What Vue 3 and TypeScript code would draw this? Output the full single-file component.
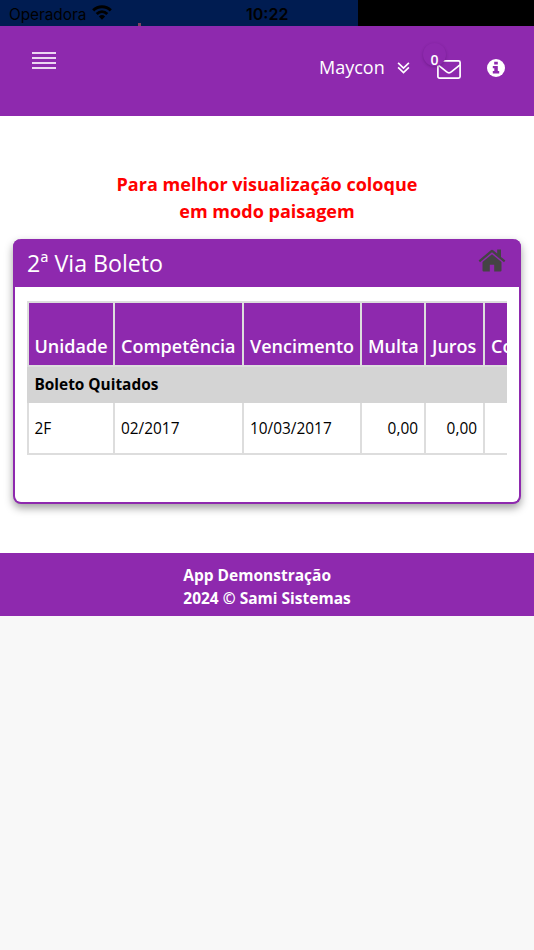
<script setup lang="ts">
interface Column {
  key: string
  label: string
  width: number
  numeric?: boolean
}

const columns: Column[] = [
  { key: 'unidade', label: 'Unidade', width: 86 },
  { key: 'competencia', label: 'Competência', width: 129 },
  { key: 'vencimento', label: 'Vencimento', width: 118 },
  { key: 'multa', label: 'Multa', width: 64, numeric: true },
  { key: 'juros', label: 'Juros', width: 59, numeric: true },
  { key: 'correcao', label: 'Correção', width: 100, numeric: true },
]

const rows: Record<string, string>[] = [
  { unidade: '2F', competencia: '02/2017', vencimento: '10/03/2017', multa: '0,00', juros: '0,00', correcao: '' },
]
</script>

<template>
  <div class="page">
    <div class="status">
      <span class="carrier">Operadora</span>
      <svg class="wifi" viewBox="0 0 20 15" fill="none" stroke="#000" stroke-width="3">
        <path d="M1.2 5.4C6.2.6 13.8.6 18.8 5.4" />
        <path d="M4.7 9C7.8 6.1 12.2 6.1 15.3 9" />
        <path d="M6.9 11.5Q10 8.7 13.1 11.5L10 14.7Z" fill="#000" stroke="none" />
      </svg>
      <span class="clock">10:22</span>
      <i class="speck"></i>
    </div>

    <header class="topbar">
      <button class="menu" aria-label="Menu"><i></i><i></i><i></i><i></i></button>
      <div class="tools">
        <span class="user">Maycon</span>
        <svg class="chevrons" viewBox="0 0 12 12" fill="none" stroke="#fff" stroke-width="1.7">
          <path d="M.6.9 6 6 11.4.9M.6 5.4 6 10.5 11.4 5.4" />
        </svg>
        <div class="mail">
          <svg viewBox="0 0 24 19" fill="none" stroke="#fff" stroke-width="1.7" stroke-linejoin="round">
            <rect x=".9" y=".9" width="22.2" height="17.2" rx="1.6" />
            <path d="M1 4.8 9.4 11.6Q12 14 14.6 11.6L23 4.8" />
          </svg>
          <span class="count">0</span>
        </div>
        <svg class="info" viewBox="0 0 18 18">
          <circle cx="9" cy="9" r="9" fill="#fff" />
          <path d="M7.2 2.8h3.6v2.7H7.2ZM5.8 7h5v5.1H12.2v2.4H5.8v-2.4h1.5V9.2H5.8Z" fill="#8e29ae" />
        </svg>
      </div>
    </header>

    <main class="content">
      <p class="notice">Para melhor visualização coloque<br />em modo paisagem</p>
      <section class="card">
        <div class="card-head">
          <h1>2ª Via Boleto</h1>
          <svg class="home" viewBox="0 0 28 23" fill="#444">
            <path d="M14 5.2 23.5 13V21.4Q23.5 22.5 22.4 22.5H16.2V15.7H11.8V22.5H5.6Q4.5 22.5 4.5 21.4V13Z" />
            <path d="M19.2.6H23V7.9L27.4 11.6 26 13.3 14 3.3 2 13.3.6 11.6 12.8 1.2Q14 .3 15.2 1.2L19.2 4.6Z" />
          </svg>
        </div>
        <div class="scroller">
          <table>
            <colgroup>
              <col v-for="c in columns" :key="c.key" :style="{ width: c.width + 'px' }" />
            </colgroup>
            <thead>
              <tr>
                <th v-for="c in columns" :key="c.key">{{ c.label }}</th>
              </tr>
            </thead>
            <tbody>
              <tr class="group">
                <td :colspan="columns.length">Boleto Quitados</td>
              </tr>
              <tr v-for="(row, i) in rows" :key="i" class="item">
                <td v-for="c in columns" :key="c.key" :class="{ numeric: c.numeric }">{{ row[c.key] }}</td>
              </tr>
            </tbody>
          </table>
        </div>
      </section>
    </main>

    <footer class="footer">
      <div>App Demonstração<br />2024 © Sami Sistemas</div>
    </footer>
  </div>
</template>

<style>
body {
  background: #f8f8f8;
}
</style>

<style scoped>
.page {
  width: 534px;
  height: 950px;
  overflow: hidden;
  background: #f8f8f8;
  font-family: 'Open Sans', sans-serif;
}
.page * {
  box-sizing: border-box;
}
.status {
  position: relative;
  display: flex;
  height: 26px;
  padding-left: 9px;
  background: linear-gradient(90deg, #001c51 358.5px, #000 358.5px);
  font: 16px/28px Inter, sans-serif;
  color: #000;
}
.carrier {
  width: 83px;
  font-size: 15.4px;
  letter-spacing: -0.05px;
  line-height: 29px;
  white-space: nowrap;
}
.wifi {
  width: 20px;
  height: 15px;
  margin-top: 5px;
}
.clock {
  position: absolute;
  left: 246px;
  top: 0;
  font-weight: 600;
}
.speck {
  position: absolute;
  left: 138px;
  top: 23px;
  width: 3px;
  height: 3px;
  background: #80435f;
}
.topbar {
  display: flex;
  justify-content: space-between;
  height: 90px;
  padding: 0 29px 0 32px;
  background: #8e29ae;
}
.menu {
  display: flex;
  flex-direction: column;
  justify-content: space-between;
  width: 24px;
  height: 17px;
  margin-top: 26px;
  padding: 0;
  border: 0;
  background: none;
}
.menu i {
  height: 1.6px;
  background: #ecd6f2;
}
.tools {
  display: flex;
  align-items: center;
  height: 84px;
  color: #fff;
}
.user {
  width: 78px;
  margin: -2px 0 0 -1px;
  font-size: 18px;
  line-height: 24px;
}
.chevrons {
  width: 13px;
  height: 12px;
  margin-top: -1px;
}
.mail {
  position: relative;
  width: 24px;
  height: 19px;
  margin: 2px 26px 0 27px;
}
.mail svg {
  display: block;
  width: 24px;
  height: 19px;
}
.count {
  position: absolute;
  left: -14px;
  top: -17px;
  width: 23px;
  height: 23px;
  border-radius: 50%;
  background: #8e29ae;
  box-shadow: 0 1px 3px rgba(50, 0, 70, 0.3);
  font-size: 14px;
  font-weight: 600;
  line-height: 33px;
  text-align: center;
}
.info {
  width: 18px;
  height: 18px;
}
.content {
  height: 437px;
  padding: 55px 13px 0;
  background: #fff;
}
.notice {
  margin: 0;
  height: 68px;
  color: #f00;
  font-size: 18.05px;
  font-weight: 700;
  line-height: 27px;
  text-align: center;
}
.card {
  height: 265px;
  border: 2px solid #8e29ae;
  border-top: 0;
  border-radius: 8px;
  background: #fff;
  box-shadow: 0 4px 8px rgba(0, 0, 0, 0.38);
}
.card-head {
  display: flex;
  justify-content: space-between;
  height: 48px;
  margin: 0 -2px;
  padding: 0 15px 0 14px;
  border-radius: 8px 8px 0 0;
  background: #8e29ae;
}
.card-head h1 {
  margin: 0;
  color: #fff;
  font-size: 23.2px;
  font-weight: 400;
  line-height: 48px;
}
.home {
  width: 28px;
  height: 23px;
  margin-top: 10px;
}
.scroller {
  margin: 14px 12px 0;
  overflow: hidden;
}
table {
  width: 558px;
  table-layout: fixed;
  border-collapse: collapse;
  color: #000;
  font-size: 15.4px;
}
th,
td {
  padding: 0 6px;
  border: 2px solid #ddd;
  text-align: left;
  white-space: nowrap;
}
th:first-child,
td:first-child {
  padding-left: 5.5px;
}
th {
  height: 64px;
  padding-bottom: 6px;
  background: #8e29ae;
  color: #fff;
  font-size: 18px;
  font-weight: 600;
  line-height: 25px;
  vertical-align: bottom;
}
.group td {
  height: 36px;
  padding-top: 1px;
  border-color: #d4d4d4;
  background: #d4d4d4;
  font-weight: 700;
}
.item td {
  height: 52px;
}
.item .numeric {
  text-align: right;
}
.footer {
  display: flex;
  justify-content: center;
  height: 63px;
  padding-top: 11px;
  background: #8e29ae;
  color: #fff;
  font-size: 15.5px;
  font-weight: 700;
  line-height: 23px;
}
</style>
